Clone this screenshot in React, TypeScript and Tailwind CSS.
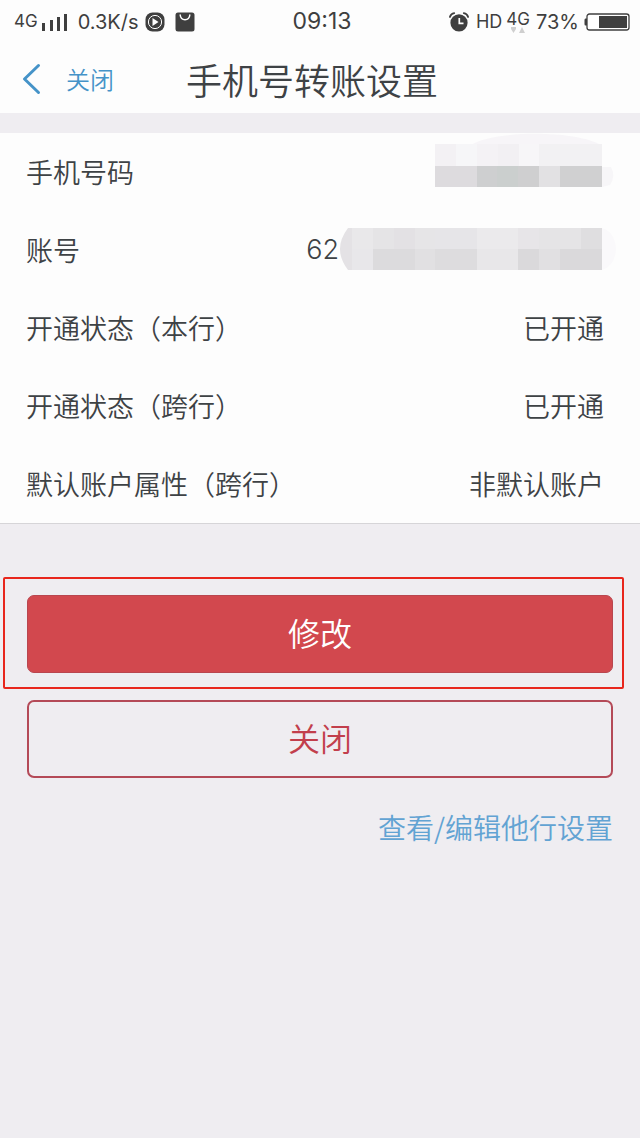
import React from 'react';

type Cell = [x: number, y: number, width: number, height: number, color: string];

const phoneCells: Cell[] = [
  [0, 11, 21, 22, '#f3f1f4'],
  [21, 11, 21, 22, '#f6f6f8'],
  [42, 11, 21, 22, '#f4f2f5'],
  [63, 11, 21, 22, '#f2f0f3'],
  [84, 11, 20, 22, '#f7f6f8'],
  [104, 11, 63, 22, '#f2f1f3'],
  [0, 33, 42, 21, '#dddbde'],
  [42, 33, 20, 21, '#cecfd0'],
  [62, 33, 21, 21, '#cbcfce'],
  [83, 33, 21, 21, '#cfcfd0'],
  [104, 33, 21, 21, '#e2e1e3'],
  [125, 33, 42, 21, '#d0d0d1'],
];

const accountCells: Cell[] = [
  [13, 17, 21, 21, '#e9e8ea'],
  [34, 17, 21, 21, '#e5e4e6'],
  [55, 17, 21, 21, '#e3e1e4'],
  [76, 17, 20, 21, '#e6e5e7'],
  [96, 17, 42, 21, '#e6e5e8'],
  [138, 17, 41, 21, '#ebeaec'],
  [179, 17, 21, 21, '#e7e5e8'],
  [200, 17, 42, 21, '#e5e4e6'],
  [242, 17, 21, 21, '#dfdee0'],
  [13, 38, 21, 21, '#e8e7ea'],
  [34, 38, 42, 21, '#dcdbdd'],
  [76, 38, 20, 21, '#e1e0e2'],
  [96, 38, 42, 21, '#dddcde'],
  [138, 38, 41, 21, '#e8e7e9'],
  [179, 38, 21, 21, '#dad9db'],
  [200, 38, 21, 21, '#e1e0e2'],
  [221, 38, 42, 21, '#dad9db'],
];

const Cells: React.FC<{ cells: Cell[] }> = ({ cells }) => (
  <>
    {cells.map(([x, y, width, height, color]) => (
      <rect key={`${x}-${y}`} x={x} y={y} width={width} height={height} fill={color} />
    ))}
  </>
);

const PhoneMask = () => (
  <svg className="h-[78px] w-[169px] shrink-0 overflow-visible" viewBox="0 0 169 78" aria-hidden="true">
    <path d="M36 12C60 -3 140 -3 166 12Z" fill="#f7f5f8" />
    <path d="M167 34h9q5 9-1 18l-8 2z" fill="#f7f6f8" />
    <g shapeRendering="crispEdges">
      <Cells cells={phoneCells} />
    </g>
  </svg>
);

const AccountMask = () => (
  <svg className="h-[78px] w-[265px] shrink-0 overflow-visible" viewBox="0 0 265 78" aria-hidden="true">
    <path d="M14 17h-5Q-7 38 9 59h5z" fill="#e4e2e5" />
    <path d="M263 17q13 4 14 21q-1 17-14 21z" fill="#faf9fb" />
    <g shapeRendering="crispEdges">
      <Cells cells={accountCells} />
    </g>
  </svg>
);

const SignalIcon = () => (
  <svg className="ml-1 h-5 w-[26px]" viewBox="0 0 26 20" fill="#3f3f3f">
    <path d="M0 11h3v8H0zM8 8h3v11H8zM15 5h3v14h-3zM22 2h3v17h-3z" />
  </svg>
);

const PlayIcon = () => (
  <svg className="ml-[6px] h-5 w-5" viewBox="0 0 20 20">
    <rect x="0.5" y="0.5" width="19" height="19" rx="7" fill="#3f3f3f" />
    <circle cx="10" cy="10" r="6.6" fill="none" stroke="#fff" strokeWidth="1" />
    <path d="M7.5 6l6 4-6 4z" fill="#fff" />
  </svg>
);

const BagIcon = () => (
  <svg className="ml-[10px] h-5 w-5" viewBox="0 0 20 20">
    <rect x="0.5" y="0.5" width="19" height="19" rx="2.5" fill="#3f3f3f" />
    <path d="M5.2 3c.6 6.2 9 6.2 9.6 0" fill="none" stroke="#fff" strokeWidth="1.5" strokeLinecap="round" />
  </svg>
);

const AlarmIcon = () => (
  <svg className="h-5 w-5" viewBox="0 0 20 20" fill="none">
    <circle cx="10" cy="10.8" r="8.6" fill="#3f3f3f" />
    <path d="M.9 5C1.5 2.8 3 1.4 5.2 1.1M19.1 5C18.5 2.8 17 1.4 14.8 1.1" stroke="#3f3f3f" strokeWidth="1.8" strokeLinecap="round" />
    <path d="M10.3 6v5.3h4.2" stroke="#fff" strokeWidth="1.7" />
  </svg>
);

const BatteryIcon = () => (
  <svg className="ml-[5px] h-[18px] w-[46px]" viewBox="0 0 46 18">
    <path d="M3 5.5H1.5Q.5 5.5.5 7v4q0 1.5 1 1.5H3z" fill="#3f3f3f" />
    <rect x="3" y="1" width="42" height="16" rx="2.5" fill="#fff" stroke="#3f3f3f" strokeWidth="1.3" />
    <rect x="15" y="3" width="28" height="12" fill="#3f3f3f" />
  </svg>
);

const rows = [
  { label: '手机号码', value: <PhoneMask /> },
  { label: '账号', value: <><span className="font-['Inter',sans-serif] text-[27px]">62</span><AccountMask /></> },
  { label: '开通状态（本行）', value: '已开通' },
  { label: '开通状态（跨行）', value: '已开通' },
  { label: '默认账户属性（跨行）', value: '非默认账户' },
];

const StatusBar = () => (
  <div className="grid h-[46px] grid-cols-[1fr_auto_1fr] items-center pb-[3px] pr-[10px] pl-[14px] font-['Inter',sans-serif] text-[20px] font-normal text-[#3f3f3f]">
    <div className="flex items-center">
      <span className="text-[17px]">4G</span>
      <SignalIcon />
      <span className="ml-[10px]">0.3K/s</span>
      <PlayIcon />
      <BagIcon />
    </div>
    <time className="text-[23px]">09:13</time>
    <div className="flex items-center justify-end">
      <AlarmIcon />
      <span className="ml-[7px] text-[18px]">HD</span>
      <span className="ml-1 flex flex-col items-center">
        <span className="text-[17px] leading-[16px]">4G</span>
        <svg className="h-[6px] w-[14px]" viewBox="0 0 14 6" fill="#cfcfcf">
          <path d="M0 0h5v2L2.5 6 0 2zM8 6l3-6 3 6z" />
        </svg>
      </span>
      <span className="ml-[6px]">73%</span>
      <BatteryIcon />
    </div>
  </div>
);

const App: React.FC = () => {
  return (
    <div className="min-h-screen bg-[#efedf1] font-['Noto_Sans_CJK_SC_DemiLight','Noto_Sans_CJK_SC',sans-serif] font-light text-[#3e4245]">
      <header className="bg-[#fdfdfd]">
        <StatusBar />
        <nav className="flex h-[67px] items-center pb-[2px] pl-[22px]">
          <a href="#back" aria-label="返回">
            <svg className="h-8 w-5" viewBox="0 0 20 32" fill="none" stroke="#4593c8" strokeWidth="3" strokeLinecap="round" strokeLinejoin="round">
              <path d="M16.5 2.5L2.5 16 16.5 29.5" />
            </svg>
          </a>
          <a href="#close" className="ml-6 text-[24px] text-[#4593c8]">关闭</a>
          <h1 className="ml-[72px] text-[36px] font-light whitespace-nowrap">手机号转账设置</h1>
        </nav>
      </header>

      <dl className="mt-5 border-b border-[#d6d5d8] bg-[#fdfdfd] pr-9 pl-[26px] text-[27px]">
        {rows.map((row) => (
          <div key={row.label} className="flex h-[78px] items-center justify-between">
            <dt>{row.label}</dt>
            <dd className="flex items-center">{row.value}</dd>
          </div>
        ))}
      </dl>

      <main className="pt-[53px]">
        <div className="mr-4 ml-[3px] rounded-[2px] border-2 border-[#e8261c] pt-4 pr-[9px] pb-[14px] pl-[22px]">
          <button type="button" className="h-[78px] w-full rounded-[7px] border border-[#b9464f] bg-[#d2484e] pb-1 text-[32px] text-white">
            修改
          </button>
        </div>
        <div className="mt-[11px] px-[27px]">
          <button type="button" className="h-[78px] w-full rounded-[7px] border-2 border-[#b44a58] pb-1 text-[32px] text-[#c23f4c]">
            关闭
          </button>
        </div>
        <div className="mt-[29px] flex justify-end pr-[27px]">
          <a href="#other-banks" className="text-[28px] leading-[40px] text-[#62a3d3]">查看/编辑他行设置</a>
        </div>
      </main>
    </div>
  );
};

export default App;
